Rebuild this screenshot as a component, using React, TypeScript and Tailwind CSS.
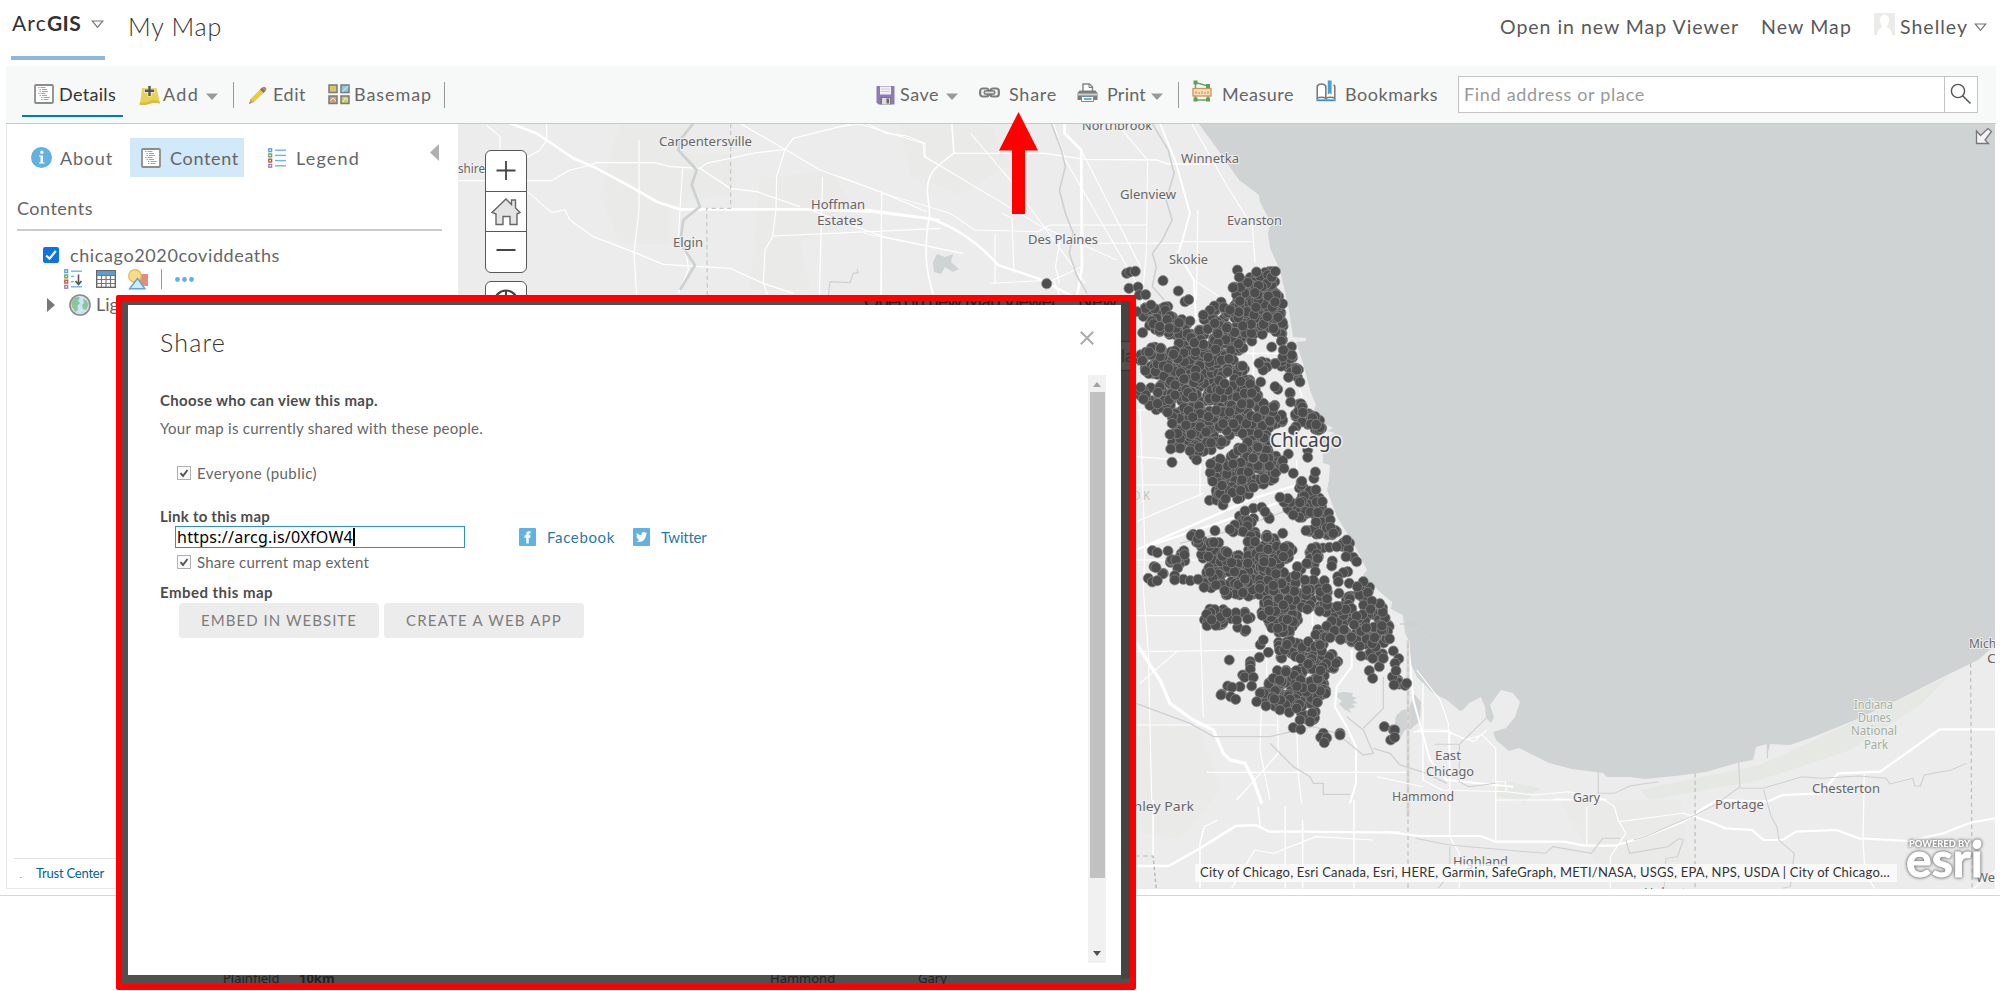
import { useLayoutEffect, useRef } from "react";
import type { ReactNode } from "react";

/* Text spread over a fixed advance width by letter spacing. */
function Fit({ w, className = "", children }: { w: number; className?: string; children: string }) {
  const ref = useRef<HTMLSpanElement>(null);
  useLayoutEffect(() => {
    const el = ref.current;
    if (!el) return;
    el.style.letterSpacing = "0px";
    el.style.letterSpacing = `${(w - el.getBoundingClientRect().width) / children.length}px`;
  }, [w, children]);
  return (
    <span ref={ref} className={`inline-block shrink-0 whitespace-pre ${className}`}>
      {children}
    </span>
  );
}

function Caret({ className = "" }: { className?: string }) {
  return (
    <svg className={`h-[7px] w-[12px] shrink-0 ${className}`} viewBox="0 0 12 7">
      <path d="M0 0.5H12L6 7Z" fill="#999" />
    </svg>
  );
}

function OpenCaret({ className = "" }: { className?: string }) {
  return (
    <svg className={`h-[9px] w-[13px] shrink-0 ${className}`} viewBox="0 0 13 9">
      <path d="M1.2 1H11.8L6.5 7.4Z" fill="none" stroke="#777" strokeWidth="1.2" />
    </svg>
  );
}

function Divider({ className = "" }: { className?: string }) {
  return <span className={`h-[26px] w-px shrink-0 bg-[#999] ${className}`} />;
}

function ListIcon({ className = "" }: { className?: string }) {
  return (
    <svg className={`h-5 w-5 shrink-0 ${className}`} viewBox="0 0 20 20">
      <rect x="1" y="1" width="18" height="18" rx="1" fill="#fff" stroke="#8c8c8c" strokeWidth="1.8" />
      <path
        d="M4 3.5h1.500M6.500 3.500h5M5.500 5.500h1.500M8 5.500h5M5.500 7.500h1.500M8 7.500h6M4 9.500h1.500M6.500 9.500h5M5.500 11.500h1.500M8 11.500h5M7 13.500h1.500M9.500 13.500h6M7 15.500h1.500M9.500 15.500h5"
        stroke="#6bb5e6"
        strokeWidth="1"
        fill="none"
      />
    </svg>
  );
}

function AddIcon({ className = "" }: { className?: string }) {
  return (
    <svg className={`h-5 w-[21px] shrink-0 ${className}`} viewBox="0 0 21 20">
      <path d="M3 3H17.500L18.500 7 21 18.500Q15 17 11 18.500T0.500 19.500L2 12Z" fill="#e8d255" />
      <path d="M1 17.500Q7 18 11 16T20.500 16.500L21 18.500Q15 17 11 18.800T0.500 19.800Z" fill="#d9bd3c" />
      <path d="M10.500 0V11.500M5 5.800H16" stroke="#f6f0cc" strokeWidth="4" />
      <path d="M10.500 1V11M5.800 5.800H15.200" stroke="#555" strokeWidth="2.400" />
    </svg>
  );
}

function PencilIcon({ className = "" }: { className?: string }) {
  return (
    <svg className={`h-[18px] w-[18px] shrink-0 ${className}`} viewBox="0 0 18 18">
      <path d="M1.500 13L12 2.500 15.500 6 5 16 0.500 17.500Z" fill="#edc93d" />
      <path d="M1.500 13L0.300 17.700 5 16Z" fill="#b8a88d" />
      <path d="M0.800 16L0.300 17.700 2 17Z" fill="#555" />
      <path d="M11 3.500L13 1.500 16.500 5 14.500 7Z" fill="#777" />
      <path d="M13 1.500Q15 0 16.600 1.400T16.500 5Z" fill="#d9705c" />
    </svg>
  );
}

function BasemapIcon({ className = "" }: { className?: string }) {
  return (
    <svg className={`h-[21px] w-[22px] shrink-0 ${className}`} viewBox="0 0 22 21">
      <g stroke="#7a7a7a" strokeWidth="1.500">
        <rect x="1" y="1" width="8" height="7.500" fill="#d9c765" />
        <rect x="13" y="1" width="8" height="7.500" fill="#8ec9dd" />
        <rect x="1" y="12" width="8" height="7.500" fill="#cfa27b" />
        <rect x="13" y="12" width="8" height="7.500" fill="#c9cc6b" />
      </g>
      <path d="M14 8L20.500 2M2 17l3-3 3 3M15 18l2-4 3 2" stroke="#fff" strokeOpacity=".7" fill="none" />
    </svg>
  );
}

function SaveIcon({ className = "" }: { className?: string }) {
  return (
    <svg className={`h-[20px] w-[19px] shrink-0 ${className}`} viewBox="0 0 19 20">
      <path d="M0.500 1H18.500V19.500H2.500L0.500 17.500Z" fill="#8d7bb8" />
      <rect x="4" y="1.500" width="11" height="8" fill="#f3f1f8" />
      <path d="M5 4h9M5 6.500h9" stroke="#cfc9e0" />
      <rect x="4.500" y="12" width="10.500" height="7.500" fill="#777" />
      <rect x="6" y="13" width="8" height="6.500" fill="#ddd" />
      <rect x="10.500" y="13.500" width="2.500" height="5" fill="#666" />
    </svg>
  );
}

function ChainIcon({ className = "" }: { className?: string }) {
  return (
    <svg className={`h-[11px] w-[21px] shrink-0 ${className}`} viewBox="0 0 21 11">
      <g fill="none" stroke="#7c7c7c" strokeWidth="2.200">
        <rect x="1.200" y="1.500" width="8.500" height="8" rx="2.500" />
        <rect x="11.300" y="1.500" width="8.500" height="8" rx="2.500" />
      </g>
      <rect x="5" y="3.800" width="11" height="3.400" rx="1.700" fill="#ddd" stroke="#666" strokeWidth="1.200" />
    </svg>
  );
}

function PrintIcon({ className = "" }: { className?: string }) {
  return (
    <svg className={`h-[20px] w-[21px] shrink-0 ${className}`} viewBox="0 0 21 20">
      <path d="M6 8V1H12.500L15.500 4V8" fill="#fff" stroke="#888" strokeWidth="1.500" />
      <path d="M12 1V4.500H15.500" fill="none" stroke="#777" />
      <path d="M2.500 7.500H18.500L20.500 10V17H0.500V10Z" fill="#7d7d7d" />
      <path d="M1 10.500H20V12.500H1Z" fill="#cfcfcf" />
      <path d="M4.500 13.500H16.500V18.500H4.500Z" fill="#fff" stroke="#888" />
      <path d="M7 16H14.500" stroke="#5fb0e5" strokeWidth="2" />
    </svg>
  );
}

function MeasureIcon({ className = "" }: { className?: string }) {
  return (
    <svg className={`h-[22px] w-[20px] shrink-0 ${className}`} viewBox="0 0 20 22">
      <path d="M3.500 20V2.500L16 6V20Z" fill="none" stroke="#67a567" strokeWidth="1.500" />
      <rect x="1" y="8.500" width="18" height="7.500" fill="#f7dfb9" stroke="#cf935c" strokeWidth="1.300" />
      <path d="M4 14v-3M7 14v-2M10 14v-3M13 14v-2M16 14v-3" stroke="#c98548" />
      <g fill="#56a35c">
        <rect x="1.500" y="0.500" width="4" height="4" />
        <rect x="14" y="4" width="4" height="4" />
        <rect x="1.500" y="17.500" width="4" height="4" />
        <rect x="14" y="17.500" width="4" height="4" />
      </g>
    </svg>
  );
}

function BookmarkIcon({ className = "" }: { className?: string }) {
  return (
    <svg className={`h-[22px] w-[20px] shrink-0 ${className}`} viewBox="0 0 20 22">
      <path
        d="M1.200 18.500V6Q2.500 4 5.500 4T9.800 6V18.500Q8.500 17.300 5.500 17.300T1.200 18.500ZM9.800 18.500Q11.500 17.300 14.500 17.300T18.800 18.500V6L17.500 4.800"
        fill="#fff"
        stroke="#7c7c7c"
        strokeWidth="1.600"
      />
      <path d="M0.500 20.300H19.500" stroke="#3a91cb" strokeWidth="1.800" fill="none" />
      <path d="M11.800 0.500H15.600V14.500L13.700 13.200 11.800 14.500Z" fill="#4a9fd6" />
    </svg>
  );
}

function LegendIcon({ className = "", arrow = false }: { className?: string; arrow?: boolean }) {
  const colors = ["#5aa7dc", "#6aa86a", "#d0553c", "#9b7fc4"];
  return (
    <svg className={`h-5 w-[18px] shrink-0 ${className}`} viewBox="0 0 18 20">
      {colors.map((c, i) => (
        <g key={c}>
          <rect x="0.800" y={0.800 + i * 5.200} width="2.800" height="2.800" fill="#fff" stroke={c} strokeWidth="1.400" />
          <path d={`M7 ${2.200 + i * 5.200}H${arrow && i > 0 && i < 3 ? 10 : 18}`} stroke="#6bb5e6" strokeWidth="1.400" />
        </g>
      ))}
      {arrow && <path d="M14.500 5.500V15M11.500 12L14.500 15.500 17.500 12" stroke="#555" strokeWidth="1.600" fill="none" />}
    </svg>
  );
}

function MiniCheck({ className = "" }: { className?: string }) {
  return (
    <span className={`flex h-[14px] w-[14px] shrink-0 items-center justify-center border border-[#b0b0b0] bg-[#fafafa] ${className}`}>
      <svg className="h-[9px] w-[10px]" viewBox="0 0 10 9">
        <path d="M1.500 4.200L4 7 8.500 1" stroke="#555" strokeWidth="2" fill="none" />
      </svg>
    </span>
  );
}

/* ------------------------------------------------------------------ map */

type Pt = [number, number];

const AREAS: Pt[][] = [
  [[170,175],[205,165],[240,160],[280,170],[315,215],[360,240],[375,195],[400,155],[430,150],[455,180],[462,60],[475,60],[485,95],[515,80],[530,60],[600,60],[605,100],[608,140],[620,190],[618,230],[625,265],[560,240],[545,270],[500,280],[488,340],[510,380],[545,435],[590,470],[610,500],[610,540],[560,550],[585,590],[610,640],[590,690],[530,715],[500,740],[430,770],[385,750],[385,645],[450,610],[500,560],[470,550],[400,600],[340,620],[310,600],[270,600],[270,490],[220,480],[180,440],[180,400],[250,400],[260,380],[180,370],[170,320],[210,290],[270,290],[280,260],[240,250],[200,220]],
  [[595,240],[625,250],[640,300],[652,340],[665,395],[640,405],[610,370],[600,345],[535,365],[545,335],[600,330],[605,300]],
  [[630,430],[680,460],[705,490],[745,545],[700,540],[650,510]],
  [[700,645],[712,680],[715,720],[735,775],[780,830],[770,860],[680,850],[690,820],[630,790],[600,745],[650,740],[665,690],[695,690]],
  [[660,880],[690,890],[745,885],[760,895],[800,870],[822,875],[812,910],[790,900],[690,895]],
  [[450,830],[465,795],[530,800],[530,880],[560,850],[580,850],[600,890],[620,880],[645,900],[600,960],[650,960],[700,880],[725,940],[670,960],[655,1010],[700,1000],[735,1000],[750,1040],[800,1050],[820,1000],[870,1000],[875,1040],[910,1070],[930,1110],[935,1165],[900,1200],[860,1200],[820,1180],[790,1165],[720,1200],[690,1180],[700,1140],[780,1100],[700,1080],[650,1080],[660,1150],[620,1160],[570,1140],[540,1090],[560,1040],[430,1040],[370,1010],[370,950],[430,900],[500,900],[500,850]],
  [[330,855],[360,845],[400,860],[440,875],[430,910],[370,930]],
  [[300,895],[325,905],[315,935],[280,970],[235,980],[260,960],[270,930]],
  [[370,1080],[400,1075],[440,1075],[530,1090],[520,1115],[480,1110],[430,1130],[400,1145],[375,1140]],
  [[595,1170],[660,1170],[700,1190],[700,1220],[780,1210],[770,1250],[730,1290],[755,1320],[720,1340],[715,1410],[665,1410],[650,1350],[600,1380],[535,1340],[545,1310],[570,1260],[640,1255],[690,1240],[600,1225]],
  [[815,1180],[860,1160],[930,1150],[910,1225],[860,1215]],
  [[935,1265],[950,1270],[985,1300],[940,1310]],
];

const SINGLES: Pt[] = [
  [-100,101],[140,70],[150,66],[166,64],[147,115],[174,111],[249,92],[295,123],[315,155],[326,149],[178,135],[197,134],[170,185],[188,248],[370,195],[330,213],[562,200],[575,291],[610,300],[537,340],[542,396],[593,418],[585,410],[630,428],[632,456],[378,546],[272,597],[276,637],[330,603],[350,630],[625,612],[608,632],[640,670],[612,655],[683,600],[683,622],[568,648],[648,530],[640,540],[552,624],[519,624],[600,742],[640,795],[678,842],[565,800],[568,806],[520,775],[545,772],[555,785],[495,783],[405,842],[217,902],[232,908],[264,903],[608,850],[525,875],[460,846],[450,838],[820,922],[798,920],[803,965],[790,968],[773,980],[757,933],[755,948],[710,912],[713,925],[222,950],[228,953],[205,985],[217,996],[232,992],[310,988],[331,992],[354,988],[284,977],[284,990],[372,1012],[777,1030],[733,992],[740,1015],[448,1230],[541,1184],[565,1207],[538,1222],[511,1235],[511,1245],[511,1258],[488,1275],[494,1282],[520,1282],[515,1308],[480,1310],[443,1308],[456,1312],[425,1332],[423,1335],[452,1340],[467,1348],[530,1355],[558,1368],[600,1380],[628,1387],[640,1433],[662,1438],[730,1450],[722,1462],[740,1464],[733,1478],[780,1450],[780,1455],[913,1430],[940,1440],[944,1440],[932,1470],[944,1462],[868,1262],[878,1285],[898,1250],[878,1225],[910,1225],[940,1203],[956,1226],[945,1240],[948,1262],[942,1305],[975,1306],[980,1300],[843,1218],[685,1175],[706,1190],[725,1203],[720,1185],[750,1163],[495,1144],[473,1132],[498,1140],[550,1170],[650,1375],[660,1410],[690,1415],[610,1065],[652,950],[680,940],[706,965],[700,990],[675,990],[680,1020],[610,920],[552,935],[470,1110],[775,995],[760,850],[850,995],[808,1000],[832,1010],[800,870],[770,890],[830,935],
];

function inside([x, y]: Pt, poly: Pt[]) {
  let hit = false;
  for (let i = 0, j = poly.length - 1; i < poly.length; j = i++) {
    const [xi, yi] = poly[i];
    const [xj, yj] = poly[j];
    if (yi > y !== yj > y && x < ((xj - xi) * (y - yi)) / (yj - yi) + xi) hit = !hit;
  }
  return hit;
}

function buildDots(): Pt[] {
  let seed = 20200417;
  const rnd = () => {
    seed = (seed + 0x6d2b79f5) >>> 0;
    let t = Math.imul(seed ^ (seed >>> 15), 1 | seed);
    t = (t + Math.imul(t ^ (t >>> 7), 61 | t)) ^ t;
    return ((t ^ (t >>> 14)) >>> 0) / 4294967296;
  };
  const pts: { p: Pt; k: number }[] = [];
  for (let y = 50; y < 1500; y += 12) {
    for (let x = 165; x < 1000; x += 12) {
      const p: Pt = [x + (rnd() - 0.5) * 34, y + (rnd() - 0.5) * 34];
      const keep = rnd() < 0.72;
      const k = rnd();
      if (keep && AREAS.some((a) => inside(p, a))) pts.push({ p, k });
    }
  }
  pts.sort((a, b) => a.k - b.k);
  return [...pts.map((d) => d.p), ...SINGLES].map(([x, y]) => [1080 + x / 3, 250 + y / 3]);
}

const DOTS = buildDots();

const LABELS: [string, number, number, number, string?][] = [
  ["Carpentersville", 659, 752, 146],
  ["shire", 458, 485, 173],
  ["Hoffman", 811, 865, 209],
  ["Estates", 817, 863, 225],
  ["Elgin", 673, 703, 247],
  ["Northbrook", 1082, 1152, 130],
  ["Winnetka", 1181, 1239, 163],
  ["Glenview", 1120, 1176, 199],
  ["Evanston", 1227, 1282, 225],
  ["Des Plaines", 1028, 1098, 244],
  ["Skokie", 1169, 1208, 264],
  ["East", 1435, 1461, 760],
  ["Chicago", 1426, 1474, 776],
  ["Hammond", 1392, 1454, 801],
  ["Gary", 1573, 1600, 802],
  ["Portage", 1715, 1764, 809],
  ["Chesterton", 1812, 1880, 793],
  ["Highland", 1453, 1508, 866],
  ["Hobart", 1644, 1686, 897],
  ["Tinley Park", 1122, 1194, 811],
  ["Mich", 1969, 1996, 648],
  ["C", 1987, 1996, 663],
  ["We", 1976, 1995, 882],
  ["Indiana", 1854, 1893, 709, "#a3ae9a"],
  ["Dunes", 1858, 1891, 722, "#a3ae9a"],
  ["National", 1851, 1897, 735, "#a3ae9a"],
  ["Park", 1864, 1888, 749, "#a3ae9a"],
  ["O K", 1132, 1150, 500, "#bdbdbd"],
];

function MapCanvas() {
  return (
    <svg className="block h-[765px] w-[1537px]" viewBox="458 124 1537 765">
      <rect x="458" y="124" width="1537" height="765" fill="#ececec" />
      <g fill="#e7e7e6">
        <path d="M620 124h70v30h40v40l-60 10v40h-50l-20-50z" opacity=".5" />
        <path d="M760 180l70-10 30 50-60 20 10 50h-60z" opacity=".5" />
        <path d="M900 124h90l20 40-50 30-50-20z" opacity=".5" />
        <path d="M1560 800h120l10 60-90 10z" opacity=".5" />
        <path d="M1140 720l60 10 20 60-40 50-44-10z" opacity=".5" />
      </g>
      <path d="M1500 780l40 8-15 14-28-6zM1640 790l120-25 130-60 60-30-30 30-70 45-90 30-110 20z" fill="#e6e8e4" />
      <path
        d="M1199 124L1218 150 1239 180 1259 195 1260 202 1271 223 1268 233 1270 248 1280 270 1289 310 1293 337 1306 338 1306 341 1296 342 1303 363 1310 390 1316 405 1314 410 1322 422 1333 428 1327 431 1335 433 1322 440 1323 463 1330 465 1329 480 1327 490 1337 517 1347 533 1357 550 1367 570 1363 575 1380 592 1392 602 1391 609 1403 615 1405 633 1410 643 1409 660 1417 677 1433 693 1447 700 1460 711 1463 710 1469 703 1481 697 1485 707 1486 718 1491 723 1494 717 1490 705 1501 690 1513 693 1520 702 1515 717 1506 728 1493 732 1496 740 1509 751 1519 748 1549 763 1572 769 1603 773 1607 777 1630 777 1645 779 1675 776 1706 772 1737 763 1753 760 1756 747 1767 743 1767 757 1770 744 1790 745 1813 737 1855 720 1898 700 1943 677 1978 660 1993 647 1996 640V124Z"
        fill="#cfd3d4"
      />
      <path
        d="M1338 693l6-1 9 1-1 3 5 2-4 2 5 3-6 1 4 3-7 2 3 4-7-3-6-6 3-3-5-4zM933 262l4-8 8 3 8-3-2 8 8 7-6 3-8-5-4 7-7-2zM1396 716l6-6 7-1 5-15 7 8-1 19-9 8-6 1-6 10-6-6z"
        fill="#cfd3d4"
      />

      {/* upper-left roads, in thirds of a pixel */}
      <g transform="translate(440 110) scale(.33333)" fill="none" stroke="#fff" strokeWidth="3.500">
        <path d="M210 40L290 70 320 90 400 145 460 170 590 240 650 275 720 298H1110L1300 305 1500 330" strokeWidth="8" />
        <path d="M320 40V90L300 120 230 160M140 45L180 80V140M55 212H335L385 182 440 168 470 158H645L690 170 780 175 800 160 950 128 1035 118 1060 85 1200 50 1240 40M1035 118L900 40M1035 118L1140 180 1320 245 1460 305M780 175L870 235 950 245 1080 290M1035 118L1010 200 1008 298 998 380 975 420 970 520 985 560M1280 40L1340 70 1400 78 1455 100V140L1500 168M250 235L280 260 335 308 375 300 390 330 460 380 585 428 670 463 870 475 970 520 1060 550M597 90V300L582 430 590 560M728 175L720 298 715 390 740 440 745 480 715 550M1148 200L1138 560M1325 245L1322 560M1000 378L1500 355M1110 300L1330 380 1480 412 1570 430" />
        <path d="M760 40L720 90 715 120 770 180 755 225 780 290 730 330 720 400 765 465 720 540" stroke="#cdd1d2" strokeWidth="8" strokeLinejoin="round" />
        <path d="M872 40V295H800L802 560" stroke="#c6c6c6" strokeDasharray="13 10" />
        <path d="M1165 560L1170 515 1230 518 1240 490 1255 488 1250 478" stroke="#cdd1d2" />
      </g>

      {/* north shore roads */}
      <g transform="translate(840 0) scale(.3954 .33333)" fill="none" stroke="#fff" strokeWidth="2.800">
        <path d="M60 628L225 655 Q320 690 400 795 L500 835 640 920M568 372V400L610 450 612 800 590 960" strokeWidth="7" />
        <path d="M283 372L288 460 250 495Q215 530 222 590T225 660 218 740 240 900M288 460H520L620 478 800 480 830 492H940" strokeWidth="4" />
        <path d="M250 495L510 680 700 780M330 400L430 540 620 850M0 380L50 372 210 430 213 470 250 495M540 372L570 480 760 870M700 372L778 480 775 750 760 960M610 450L760 800M905 630L902 900M890 372L980 560 1043 680 1050 790M865 725H1043M612 800L540 840 380 850M0 530L110 580 280 640 340 690 500 695 530 675H775M105 580V900M225 740L60 700M392 700V850M440 820L435 655 410 640M640 730H865M895 840L960 890M540 840L560 900M560 700L545 800 555 850" />
        <path d="M810 372L850 490 885 640 865 725 855 760 895 840 900 960" strokeWidth="5" />
        <path d="M535 372L560 450 570 500 555 570 570 640 590 700 580 760 600 830 625 880M790 372L830 450 845 520 825 600 840 660 815 720 790 760 800 800 790 860 820 900" stroke="#cdd1d2" strokeWidth="4" />
      </g>

      {/* city and south-west roads */}
      <g transform="translate(1080 250) scale(.33333)" fill="none" stroke="#fff" strokeWidth="3.500">
        <path d="M168 1178L210 1245 240 1290 270 1360 340 1410 400 1440 430 1510 450 1530 495 1540 520 1590 545 1660" strokeWidth="10" />
        <path d="M168 900L350 820 520 745 700 690M200 890L590 760" strokeWidth="7" />
        <path d="M168 480H300M180 480L195 900 190 1020 205 1200 215 1650M168 620L300 630M168 705H380M168 815L370 730M360 600V740M520 280V420M500 310H640M168 1097H360L370 1400M168 1205L550 1200M290 1205L180 1300M168 1425H600M380 1567H980M545 1350L540 1500 570 1650M592 1380L595 1510 470 1650M650 1430L655 1580 665 1660M650 630V760H740M1010 1260L1080 1350 1105 1420 1110 1600M1000 1445H1100L1180 1475 1220 1440M168 930H700M560 1100V1300M690 900L700 1200M640 350L700 560" />
        <path d="M815 1200V1250L770 1310 765 1370 800 1430 828 1490V1600L810 1660M985 1180L1000 1350 1050 1530 1100 1590 1300 1610" strokeWidth="6" />
        <path d="M168 1360L330 1420 400 1460H570L700 1430 770 1450 850 1515 880 1510 850 1440 800 1400M850 1435L910 1375V1280M680 760L460 840 300 880M570 1480L640 1550 690 1580 700 1600H730V1633H810M880 1495L930 1510 960 1545 1040 1570 1100 1600M960 1122H1015L1065 1170" stroke="#cdd1d2" strokeWidth="4" />
        <path d="M984 1170V1700" stroke="#dcdad6" strokeWidth="9" />
        <path d="M984 1180V2000" stroke="#c8c5bf" strokeWidth="4" strokeDasharray="14 10" />
      </g>

      {/* south shore roads */}
      <g transform="translate(1400 640) scale(.3827 .33333)" fill="none" stroke="#fff" strokeWidth="3.200">
        <path d="M-40 575L50 588H210L250 605H430L480 617H560L640 590 740 545 800 500 830 480 960 485 1000 465 1100 460 1145 400 1255 395 1410 268H1555M770 530L820 550 850 565 920 570 950 600H1000L1035 575 1140 570 1200 595 1330 603 1420 580 1490 548 1557 535" strokeWidth="6.500" />
        <path d="M45 270H120L170 300 215 285 250 325V600M130 270V590L155 640V745M60 130V420L110 450 280 455 350 465 440 455 520 470 560 500 570 540 590 580 550 650V745M570 545L640 535 740 520 770 530M250 480H540M250 425H275L278 455M488 500V615M400 478H540M1213 400L1210 600 1215 700 1240 745M-70 600L-220 590-330 640-380 630-440 745M-60 410L60 440M1557 690L1500 745M-300 745V500" />
        <path d="M90 313H155V425L180 440 250 430M155 313L225 235M518 395V460H560L600 438 675 425M885 370L888 440 830 490 780 520 640 590 610 600M888 445H950L1050 410 1100 415 1200 408 1270 415 1280 432 1340 415 1345 438H1360L1370 405 1440 390 1480 370M925 320L960 310V355M590 600L600 640 700 620 730 595 740 600 725 650 695 655 690 745M40 595L130 615 380 640 400 620 500 640 530 595H575M950 450L970 530 985 560 990 600 1030 640 1020 740 1000 745M130 620V700L100 745" stroke="#cdd1d2" strokeWidth="3" />
        <path d="M771 400V745M1491 70L1495 745" stroke="#bdbdbd" strokeDasharray="12 10" />
      </g>

      {/* bottom roads left of the attribution */}
      <g transform="translate(700 820) scale(.4464 .33333)" fill="none" stroke="#fff" strokeWidth="3.200">
        <path d="M975 138H1050L1120 85 1200 18 1245 15 1275 35H1350L1568 38" strokeWidth="7" />
        <path d="M1015 -60V110M1120 205V70L1130 20 1160 0M1350 0V205M1465 -60V205M1255 20L1250 -40" />
        <path d="M975 108H1015L1022 205" stroke="#b9b9b9" strokeDasharray="10 8" />
      </g>

      <g fill="#4d4d4d" stroke="#8c8c8c" strokeWidth=".7">
        {DOTS.map(([x, y], i) => (
          <circle key={i} cx={x.toFixed(1)} cy={y.toFixed(1)} r="5.100" />
        ))}
      </g>

      <g fontFamily="'Noto Sans', sans-serif" fontSize="13.200" paintOrder="stroke" stroke="#f1f1f1" strokeWidth="2" strokeLinejoin="round">
        {LABELS.map(([t, x0, x1, y, c]) => (
          <text key={`${t}${y}`} x={x0} y={y} textLength={x1 - x0} lengthAdjust="spacingAndGlyphs" fill={c ?? "#666"}>
            {t}
          </text>
        ))}
        <text x="1270" y="447" fontSize="19.500" textLength="72" lengthAdjust="spacingAndGlyphs" fill="#444" strokeWidth="3">
          Chicago
        </text>
      </g>
    </svg>
  );
}

function EsriLogo() {
  return (
    <svg className="absolute right-[6px] bottom-[4px] h-[54px] w-[90px]" viewBox="1900 831 90 54">
      <g fontFamily="Lato, sans-serif" fill="#fff" className="[filter:drop-shadow(0_0_1.500px_#777)_drop-shadow(0_0_1px_#999)]">
        <text x="1910" y="847" fontSize="9" fontWeight="900" textLength="61" lengthAdjust="spacingAndGlyphs">
          POWERED BY
        </text>
        <text x="1907" y="876.500" fontSize="48" fontWeight="700" textLength="77" lengthAdjust="spacingAndGlyphs" stroke="#fff" strokeWidth=".8">
          esri
        </text>
        <circle cx="1978.500" cy="843.500" r="4" />
      </g>
    </svg>
  );
}

function MapControls() {
  return (
    <div className="absolute top-[26px] left-[27px] w-[42px]">
      <div className="flex h-[123px] flex-col divide-y divide-[#57585a] overflow-hidden rounded-[6px] border border-[#57585a] bg-white">
        <button className="flex flex-1 items-center justify-center">
          <svg className="h-[20px] w-[20px]" viewBox="0 0 20 20">
            <path d="M10 0V19M0.500 9.500H19.500" stroke="#444" strokeWidth="1.800" />
          </svg>
        </button>
        <button className="flex flex-1 items-center justify-center">
          <svg className="h-[28px] w-[30px]" viewBox="0 0 30 28">
            <path d="M1 14.500L15 1 20.500 6.500V2H24.500V10L29 14.500 26 16V26.500H19V18.500H12V26.500H5V16Z" fill="#e4e4e4" stroke="#666" strokeWidth="1.400" />
          </svg>
        </button>
        <button className="flex flex-1 items-center justify-center">
          <svg className="h-[20px] w-[20px]" viewBox="0 0 20 20">
            <path d="M0.500 8H19.500" stroke="#444" strokeWidth="1.800" />
          </svg>
        </button>
      </div>
      <button className="mt-[8px] flex h-[42px] w-full items-center justify-center rounded-[6px] border border-[#57585a] bg-white">
        <svg className="h-[26px] w-[26px]" viewBox="0 0 26 26">
          <circle cx="13" cy="13" r="11.500" fill="none" stroke="#444" strokeWidth="2.200" />
          <path d="M13 1V8M13 18V25M1 13H8M18 13H25" stroke="#444" strokeWidth="2" />
        </svg>
      </button>
    </div>
  );
}

/* --------------------------------------------------------------- chrome */

function Header() {
  return (
    <header className="flex h-[66px] items-start text-[#595959]">
      <div className="ml-[11px] flex h-[60px] w-[94px] shrink-0 items-start border-b-4 border-[#8fb7de] pt-[9px]">
        <span className="ml-px flex w-[70px] text-[21px] leading-7 text-[#323232]">
          <Fit w={35}>Arc</Fit>
          <Fit w={34} className="font-bold">GIS</Fit>
        </span>
        <OpenCaret className="mt-[11px] ml-[9px]" />
      </div>
      <Fit w={94} className="mt-[8px] ml-[23px] text-[25px] leading-9 font-light text-[#333]">My Map</Fit>
      <div className="flex-1" />
      <nav className="flex pt-[13px] text-[19.500px] leading-7">
        <Fit w={239}>Open in new Map Viewer</Fit>
        <Fit w={91} className="ml-[22px]">New Map</Fit>
        <svg className="ml-[22px] h-[22px] w-[21px]" viewBox="0 0 21 22">
          <rect width="21" height="22" fill="#ebebe9" />
          <path d="M3 22Q4 15 8.500 14 5 9 6 5 8 1.500 10.500 1.500T15 5Q16 9 12.500 14 17 15 18 22Z" fill="#fff" />
        </svg>
        <Fit w={68} className="ml-[5px]">Shelley</Fit>
        <OpenCaret className="mt-[10px] mr-[13px] ml-[6px]" />
      </nav>
    </header>
  );
}

function Toolbar() {
  return (
    <div className="ml-[6px] flex h-[58px] w-[1990px] items-center border-b border-[#c6c9c8] bg-[#f7f9f8] text-[18px] text-[#666]">
      <div className="mt-px ml-[16px] flex h-[43px] w-[101px] shrink-0 items-center border-b-2 border-[#0079c1] text-[#333]">
        <ListIcon className="ml-3" />
        <Fit w={57} className="ml-[5px]">Details</Fit>
      </div>
      <AddIcon className="ml-[16px]" />
      <Fit w={36} className="ml-[3px]">Add</Fit>
      <Caret className="mt-1 ml-[7px]" />
      <Divider className="ml-[15px]" />
      <PencilIcon className="ml-[15px]" />
      <Fit w={33} className="ml-[6px]">Edit</Fit>
      <BasemapIcon className="ml-[22px]" />
      <Fit w={78} className="ml-[4px]">Basemap</Fit>
      <Divider className="ml-[12px]" />
      <SaveIcon className="ml-[431px]" />
      <Fit w={39} className="ml-[5px]">Save</Fit>
      <Caret className="mt-1 ml-[7px] w-[11px]" />
      <ChainIcon className="mb-1 ml-[21px]" />
      <Fit w={48} className="ml-[9px]">Share</Fit>
      <PrintIcon className="mb-1 ml-[20px]" />
      <Fit w={39} className="ml-[9px]">Print</Fit>
      <Caret className="mt-1 ml-[5px]" />
      <Divider className="ml-[15px]" />
      <MeasureIcon className="mb-[7px] ml-[13px]" />
      <Fit w={72} className="ml-[10px]">Measure</Fit>
      <BookmarkIcon className="mb-[7px] ml-[22px]" />
      <Fit w={93} className="ml-[9px]">Bookmarks</Fit>
      <div className="ml-[20px] flex h-[37px] w-[520px] shrink-0 border border-[#c4c4c4] bg-white">
        <div className="flex w-[486px] items-center border-r border-[#c4c4c4] pl-[5px] text-[#999]">
          <Fit w={181}>Find address or place</Fit>
        </div>
        <svg className="mt-[6px] ml-[5px] h-[22px] w-[22px]" viewBox="0 0 22 22">
          <circle cx="8" cy="8" r="6.600" fill="none" stroke="#555" strokeWidth="1.400" />
          <path d="M12.600 12.800L20.500 20.500" stroke="#555" strokeWidth="1.600" />
        </svg>
      </div>
    </div>
  );
}

function SidePanel() {
  return (
    <aside className="flex h-[765px] w-[452px] shrink-0 flex-col border-b border-l border-[#e8e8e8] text-[18px] text-[#666]">
      <div className="mt-[14px] flex h-[39px] items-center">
        <svg className="ml-6 h-[21px] w-[21px] shrink-0" viewBox="0 0 21 21">
          <circle cx="10.500" cy="10.500" r="10.500" fill="#62b1e3" />
          <circle cx="10.800" cy="5.300" r="1.700" fill="#fff" />
          <path d="M8 8.500h4v7h1.500v1H8v-1h1.500v-6H8z" fill="#fff" />
        </svg>
        <Fit w={53} className="mt-[2px] ml-[8px]">About</Fit>
        <div className="ml-[17px] flex h-[39px] w-[114px] shrink-0 items-center bg-[#d2e9f9]">
          <ListIcon className="ml-[11px]" />
          <Fit w={69} className="mt-[2px] ml-[9px]">Content</Fit>
        </div>
        <LegendIcon className="ml-[24px]" />
        <Fit w={64} className="mt-[2px] ml-[10px]">Legend</Fit>
        <svg className="mb-[10px] ml-[70px] h-[17px] w-[9px] shrink-0" viewBox="0 0 9 17">
          <path d="M9 0V17L0 8.500Z" fill="#b0b0b0" />
        </svg>
      </div>
      <h2 className="mt-[17px] ml-[10px] flex h-[37px] w-[425px] border-b-2 border-[#ccc] leading-7">
        <Fit w={76}>Contents</Fit>
      </h2>
      <div className="mt-[10px] flex h-[28px] items-center pl-9">
        <svg className="h-4 w-4" viewBox="0 0 16 16">
          <rect width="16" height="16" rx="2" fill="#0c72e8" />
          <path d="M3.200 8.500L6.500 11.700 12.800 4" stroke="#fff" strokeWidth="2.200" fill="none" />
        </svg>
        <Fit w={210} className="ml-[11px]">chicago2020coviddeaths</Fit>
      </div>
      <div className="flex h-[20px] items-center pl-[57px]">
        <LegendIcon arrow />
        <svg className="ml-[14px] h-[18px] w-[20px]" viewBox="0 0 20 18">
          <rect x="0.700" y="0.700" width="18.600" height="16.600" fill="#fff" stroke="#666" strokeWidth="1.400" />
          <rect x="1" y="1" width="18" height="4" fill="#5a9fce" />
          <path d="M1 5.500H19M1 9.500H19M1 13.500H19M5.500 5V17M10 5V17M14.500 5V17" stroke="#777" strokeWidth="1.200" />
        </svg>
        <svg className="ml-[12px] h-[21px] w-[20px]" viewBox="0 0 20 21">
          <rect x="10" y="5" width="10" height="12" fill="#e58e75" />
          <circle cx="7" cy="7" r="6.300" fill="#f8dc8c" stroke="#e0b856" strokeWidth="1.200" />
          <path d="M9.500 9.500L17 19.800H1.500Z" fill="#d2e9f9" stroke="#5aa7dc" strokeWidth="1.400" />
        </svg>
        <span className="ml-[13px] h-[20px] w-px bg-[#999]" />
        <svg className="ml-[13px] h-[5px] w-[19px]" viewBox="0 0 19 5">
          <g fill="#5fb0e5">
            <circle cx="2.500" cy="2.500" r="2.400" />
            <circle cx="9.500" cy="2.500" r="2.400" />
            <circle cx="16.500" cy="2.500" r="2.400" />
          </g>
        </svg>
      </div>
      <div className="mt-[2px] flex h-[27px] items-center pl-10">
        <svg className="h-[14px] w-[8px]" viewBox="0 0 8 14">
          <path d="M0 0L8 7 0 14Z" fill="#777" />
        </svg>
        <svg className="ml-[14px] h-[22px] w-[22px]" viewBox="0 0 22 22">
          <circle cx="11" cy="11" r="10" fill="#cde6f3" stroke="#8a8a8a" strokeWidth="1.600" />
          <path d="M5 4Q8 2.500 11 3.500L9 7 11 9 8.500 12 9 16 6.500 18 3 13 2.500 8ZM14 4.500L18 7 19.500 11 17 16 14 15 13 11 15 9Z" fill="#8ec49a" />
        </svg>
        <span className="ml-[5px]">Light Gray Canvas</span>
      </div>
      <div className="flex-1" />
      <div className="ml-[7px] flex h-[30px] items-center border-t border-[#e2e2e2]">
        <span className="mt-2 ml-[6px] h-px w-[2px] bg-[#bbb]" />
        <Fit w={68} className="mt-px ml-[14px] text-[13px] text-[#00619b]">Trust Center</Fit>
      </div>
    </aside>
  );
}

function MapPane() {
  return (
    <main className="relative h-[765px] w-[1537px] overflow-hidden">
      <MapCanvas />
      <MapControls />
      <div className="absolute right-[98px] bottom-[7px] flex h-[18px] w-[702px] items-center bg-white/70 pl-[5px] text-[13px] text-[#333]">
        <Fit w={690}>City of Chicago, Esri Canada, Esri, HERE, Garmin, SafeGraph, METI/NASA, USGS, EPA, NPS, USDA | City of Chicago…</Fit>
      </div>
      <EsriLogo />
      <svg className="absolute top-[2px] right-[2px] h-[20px] w-[18px]" viewBox="0 0 18 20">
        <path d="M1.500 5V17.500H13.500L10 14 16.500 5.500 13 2.500 5.500 9.500Z" fill="#f4f4f4" stroke="#777" strokeWidth="1.300" />
      </svg>
    </main>
  );
}

function Row({ className, children }: { className: string; children: ReactNode }) {
  return <div className={`flex shrink-0 items-center ${className}`}>{children}</div>;
}

function ShareDialog() {
  return (
    <div className="absolute top-[295px] left-[116px] h-[695px] w-[1020px] overflow-hidden rounded-[2px] border-[6px] border-[#fe0000] bg-[#505050] text-[#222]">
      <div className="absolute top-[-12px] left-[742px] flex text-[19px] leading-6">
        <Fit w={193}>Open in new Map Viewer</Fit>
        <span className="ml-[21px]">New Map</span>
      </div>
      <div className="absolute top-0 right-0 h-[678px] w-[9px] overflow-hidden bg-[#454545] pt-[40px]">
        <div className="h-[30px] border-y border-[#333] bg-[#505050] text-[17px] leading-7 text-[#333]">la</div>
      </div>
      <div className="absolute top-[669px] left-[101px] flex text-[13px] leading-4 [font-family:'Noto_Sans',sans-serif]">
        <span className="w-[76px]">Plainfield</span>
        <span className="w-[471px] font-bold">10km</span>
        <span className="w-[148px]">Hammond</span>
        <span>Gary</span>
      </div>
      <section className="relative mt-[4px] ml-[6px] flex h-[670px] w-[993px] flex-col bg-white text-[15px] text-[#666]">
        <Row className="mt-[20px] ml-[32px] h-[36px] text-[25px]">
          <Fit w={66} className="font-light text-[#333]">Share</Fit>
          <svg className="mb-[11px] ml-[854px] h-[14px] w-[14px]" viewBox="0 0 14 14">
            <path d="M0.800 0.800L13.200 13.200M13.200 0.800L0.800 13.200" stroke="#aaa" strokeWidth="2" />
          </svg>
        </Row>
        <Row className="mt-[28px] ml-[32px] h-[22px] font-bold text-[#4c4c4c]">
          <Fit w={218}>Choose who can view this map.</Fit>
        </Row>
        <Row className="mt-[6px] ml-[32px] h-[22px]">
          <Fit w={323}>Your map is currently shared with these people.</Fit>
        </Row>
        <Row className="mt-[22px] ml-[49px] h-[24px]">
          <MiniCheck />
          <Fit w={120} className="ml-[6px]">Everyone (public)</Fit>
        </Row>
        <Row className="mt-[20px] ml-[32px] h-[22px] font-bold text-[#4c4c4c]">
          <Fit w={110}>Link to this map</Fit>
        </Row>
        <Row className="-mt-px ml-[47px] h-[22px]">
          <div className="flex h-[22px] w-[290px] items-center border border-[#2f8fd0] pl-px text-[16px] text-black [font-family:'Noto_Sans',sans-serif]">
            <Fit w={176}>https://arcg.is/0XfOW4</Fit>
            <span className="h-[18px] w-[1.500px] bg-black" />
          </div>
          <svg className="ml-[54px] h-[18px] w-[17px]" viewBox="0 0 17 18">
            <rect width="17" height="18" rx="1" fill="#62b1e3" />
            <path d="M7.300 15.500V9.800H5.500V7.300H7.300V6Q7.300 3.200 10 3.200H11.600V5.500H10.500Q9.700 5.500 9.700 6.400V7.300H11.600L11.300 9.800H9.700V15.500Z" fill="#fff" />
          </svg>
          <Fit w={68} className="ml-[11px] text-[#2a78ab]">Facebook</Fit>
          <svg className="ml-[18px] h-[18px] w-[17px]" viewBox="0 0 17 18">
            <rect width="17" height="18" rx="1" fill="#62b1e3" />
            <path d="M3 13.200Q5 13.300 6.300 12.200 4.700 11.900 4.300 10.500L5.200 10.400Q3.400 9.700 3.400 7.900L4.400 8.200Q2.900 6.700 3.800 4.900 5.700 7.100 8.500 7.200 8.100 4.200 10.800 4.100 11.900 4.100 12.600 4.900L14 4.300Q13.700 5.200 13 5.700L14.300 5.400 13.100 6.600Q13.200 9.800 11 12 7.500 15.300 3 13.200Z" fill="#fff" />
          </svg>
          <Fit w={45} className="ml-[11px] text-[#2a78ab]">Twitter</Fit>
        </Row>
        <Row className="mt-[2px] ml-[49px] h-[24px]">
          <MiniCheck />
          <Fit w={172} className="ml-[6px]">Share current map extent</Fit>
        </Row>
        <Row className="mt-[7px] ml-[32px] h-[22px] font-bold text-[#4c4c4c]">
          <Fit w={113}>Embed this map</Fit>
        </Row>
        <Row className="ml-[51px] gap-[5px] text-[#7d7d7d]">
          <button className="flex h-[35px] w-[200px] items-center justify-center rounded-[4px] bg-[#ececec]">
            <Fit w={156}>EMBED IN WEBSITE</Fit>
          </button>
          <button className="flex h-[35px] w-[200px] items-center justify-center rounded-[4px] bg-[#ececec]">
            <Fit w={156}>CREATE A WEB APP</Fit>
          </button>
        </Row>
        <div className="absolute top-[70px] right-[15px] flex h-[588px] w-[18px] flex-col items-center justify-between bg-[#f1f1f1] py-[7px]">
          <svg className="h-[5px] w-[8px]" viewBox="0 0 8 5">
            <path d="M0 5L4 0 8 5Z" fill="#a3a3a3" />
          </svg>
          <div className="mt-[5px] mb-auto h-[486px] w-[15px] shrink-0 bg-[#c1c1c1]" />
          <svg className="h-[5px] w-[8px]" viewBox="0 0 8 5">
            <path d="M0 0H8L4 5Z" fill="#505050" />
          </svg>
        </div>
      </section>
    </div>
  );
}

export default function App() {
  return (
    <div className="relative h-[991px] w-[2000px] overflow-hidden bg-white [font-family:Lato,sans-serif]">
      <Header />
      <Toolbar />
      <div className="ml-[6px] flex h-[771px]">
        <SidePanel />
        <MapPane />
      </div>
      <div className="h-px bg-[#d6d6d6]" />
      <ShareDialog />
      <svg className="absolute top-[112px] left-[999px] h-[102px] w-[39px]" viewBox="0 0 39 102">
        <path d="M19.500 0L39 38.500H26V102H13V38.500H0Z" fill="#fe0000" />
      </svg>
    </div>
  );
}
